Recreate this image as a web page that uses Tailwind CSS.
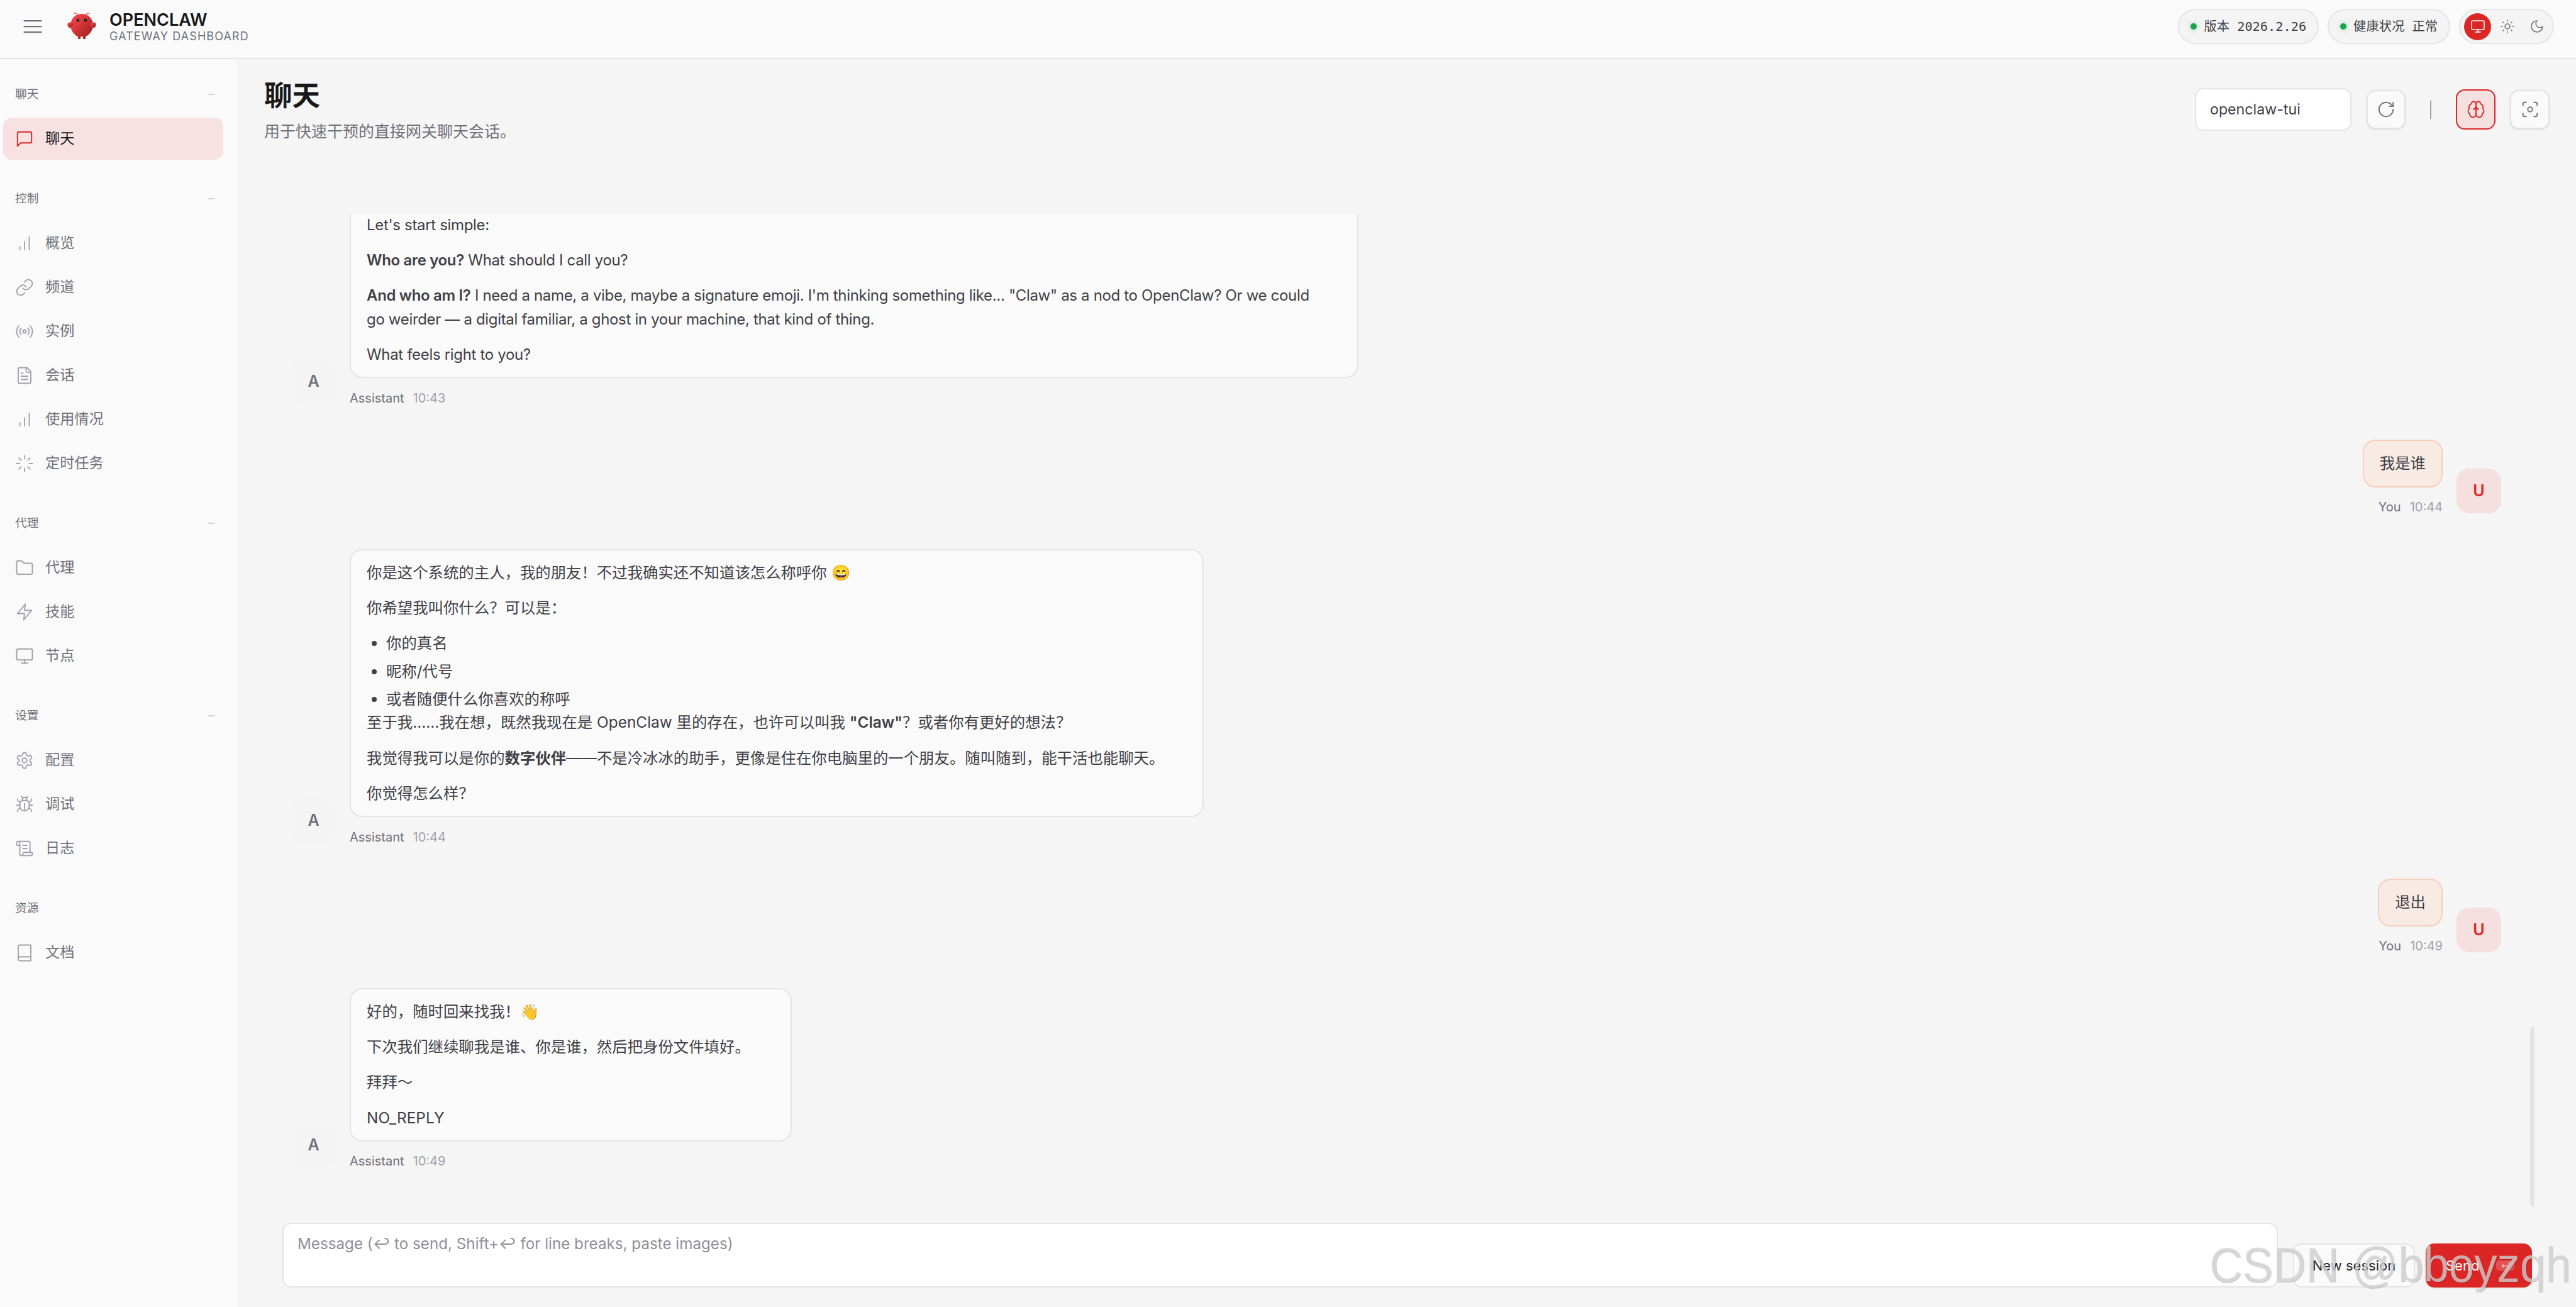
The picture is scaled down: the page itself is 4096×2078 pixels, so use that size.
<!DOCTYPE html>
<html lang="zh-CN">
<head>
    <meta charset="UTF-8">
    <title>OpenClaw Gateway Dashboard</title>
    <script src="https://cdn.jsdelivr.net/npm/@tailwindcss/browser@4"></script>
</head>
<body class="bg-[#f5f5f5] font-['Inter','Noto_Sans_CJK_SC',sans-serif] text-[#3f3f46] overflow-hidden">
<div class="relative flex flex-col h-[2078px] w-[4096px] overflow-hidden">

    <!-- Top bar -->
    <header class="flex items-center justify-between h-[94px] shrink-0 pb-[8px] pl-[34px] pr-[35px] bg-[#fafafa] border-b-2 border-[#e4e4e7]">
        <div class="flex items-center">
            <svg class="w-[36px] h-[36px] text-[#71717a]" viewBox="0 0 24 24" fill="none" stroke="currentColor" stroke-width="1.5" stroke-linecap="round"><path d="M3 6h18M3 12h18M3 18h18"/></svg>
            <svg class="ml-[36px] w-[48px] h-[48px]" viewBox="0 0 120 120">
                <defs><linearGradient id="lobster" x1="0" y1="0" x2="1" y2="1"><stop offset="0" stop-color="#ff4d4d"/><stop offset="1" stop-color="#991b1b"/></linearGradient></defs>
                <path fill="url(#lobster)" d="M60 10C30 10 15 35 15 55C15 75 30 95 45 100L45 110L55 110L55 100C55 100 60 102 65 100L65 110L75 110L75 100C90 95 105 75 105 55C105 35 90 10 60 10Z"/>
                <path fill="url(#lobster)" d="M20 45C5 40 0 50 5 60C10 70 20 65 25 55C28 48 25 45 20 45Z"/>
                <path fill="url(#lobster)" d="M100 45C115 40 120 50 115 60C110 70 100 65 95 55C92 48 95 45 100 45Z"/>
                <path d="M45 15Q35 5 30 8M75 15Q85 5 90 8" fill="none" stroke="#ff4d4d" stroke-width="3" stroke-linecap="round"/>
                <circle cx="45" cy="35" r="6" fill="#050810"/><circle cx="75" cy="35" r="6" fill="#050810"/>
                <circle cx="46" cy="34" r="2.5" fill="#00e5cc"/><circle cx="76" cy="34" r="2.5" fill="#00e5cc"/>
            </svg>
            <div class="ml-[20px] flex flex-col">
                <span class="text-[27px] leading-[31px] font-semibold text-[#18181b]">OPENCLAW</span>
                <span class="text-[18px] leading-[22px] text-[#71717a] tracking-[1.1px]">GATEWAY DASHBOARD</span>
            </div>
        </div>
        <div class="flex items-center gap-[14px]">
            <div class="flex items-center h-[56px] px-[18px] gap-[11px] rounded-full bg-[#f4f4f5] border-2 border-[#e4e4e7] text-[20.3px] font-['DejaVu_Sans_Mono','Noto_Sans_CJK_SC',monospace] whitespace-pre">
                <span class="w-[10px] h-[10px] rounded-full bg-[#16a34a] shadow-[0_0_8px_rgba(22,163,74,0.4)]"></span><span>版本 2026.2.26</span>
            </div>
            <div class="flex items-center h-[56px] px-[18px] gap-[11px] rounded-full bg-[#f4f4f5] border-2 border-[#e4e4e7] text-[20.3px] font-['DejaVu_Sans_Mono','Noto_Sans_CJK_SC',monospace] whitespace-pre">
                <span class="w-[10px] h-[10px] rounded-full bg-[#16a34a] shadow-[0_0_8px_rgba(22,163,74,0.4)]"></span><span>健康状况 正常</span>
            </div>
            <div class="flex items-center h-[56px] pl-[6px] pr-[4px] gap-[4px] rounded-full bg-[#f4f4f5] border-2 border-[#e4e4e7]">
                <span class="flex items-center justify-center w-[43px] h-[43px] rounded-full bg-[#dc2626] text-white">
                    <svg class="w-[24px] h-[24px]" viewBox="0 0 24 24" fill="none" stroke="currentColor" stroke-width="1.5" stroke-linecap="round" stroke-linejoin="round"><rect width="20" height="14" x="2" y="3" rx="2"/><line x1="8" x2="16" y1="21" y2="21"/><line x1="12" x2="12" y1="17" y2="21"/></svg>
                </span>
                <span class="flex items-center justify-center w-[43px] h-[43px] text-[#71717a]">
                    <svg class="w-[24px] h-[24px]" viewBox="0 0 24 24" fill="none" stroke="currentColor" stroke-width="1.5" stroke-linecap="round"><circle cx="12" cy="12" r="4"/><path d="M12 2v2M12 20v2M4.93 4.93l1.41 1.41M17.66 17.66l1.41 1.41M2 12h2M20 12h2M6.34 17.66l-1.41 1.41M19.07 4.93l-1.41 1.41"/></svg>
                </span>
                <span class="flex items-center justify-center w-[43px] h-[43px] text-[#71717a]">
                    <svg class="w-[24px] h-[24px]" viewBox="0 0 24 24" fill="none" stroke="currentColor" stroke-width="1.5" stroke-linecap="round" stroke-linejoin="round"><path d="M12 3a6 6 0 0 0 9 9 9 9 0 1 1-9-9Z"/></svg>
                </span>
            </div>
        </div>
    </header>

    <div class="flex flex-1 min-h-0">
        <!-- Sidebar -->
        <aside class="w-[376px] shrink-0 bg-[#fafafa] pt-[41px] pl-[5px] pr-[21px] text-[#71717a]">
            <div class="flex items-center justify-between h-[30px] mb-[22px] pl-[19px] pr-[14px] text-[18.7px]"><span>聊天</span><span class="w-[10px] h-[2px] bg-[#d4d4d8]"></span></div>
            <div class="flex flex-col gap-[3px]">
                <a class="flex items-center h-[67px] pl-[19px] gap-[18px] rounded-[14px] bg-[#f7e1e1] text-[23.2px] text-[#18181b]">
                    <svg class="w-[30px] h-[30px] text-[#dc2626]" viewBox="0 0 24 24" fill="none" stroke="currentColor" stroke-width="1.5" stroke-linecap="round" stroke-linejoin="round"><path d="M21 15a2 2 0 0 1-2 2H7l-4 4V5a2 2 0 0 1 2-2h14a2 2 0 0 1 2 2z"/></svg>聊天</a>
            </div>

            <div class="flex items-center justify-between h-[30px] mt-[47px] mb-[22px] pl-[19px] pr-[14px] text-[18.7px]"><span>控制</span><span class="w-[10px] h-[2px] bg-[#d4d4d8]"></span></div>
            <div class="flex flex-col gap-[3px] text-[23.2px]">
                <a class="flex items-center h-[67px] pl-[19px] gap-[18px]"><svg class="w-[30px] h-[30px] text-[#a1a1aa]" viewBox="0 0 24 24" fill="none" stroke="currentColor" stroke-width="1.5" stroke-linecap="round" stroke-linejoin="round"><path d="M12 20V10M18 20V4M6 20v-4"/></svg>概览</a>
                <a class="flex items-center h-[67px] pl-[19px] gap-[18px]"><svg class="w-[30px] h-[30px] text-[#a1a1aa]" viewBox="0 0 24 24" fill="none" stroke="currentColor" stroke-width="1.5" stroke-linecap="round" stroke-linejoin="round"><path d="M10 13a5 5 0 0 0 7.54.54l3-3a5 5 0 0 0-7.07-7.07l-1.72 1.71"/><path d="M14 11a5 5 0 0 0-7.54-.54l-3 3a5 5 0 0 0 7.07 7.07l1.71-1.71"/></svg>频道</a>
                <a class="flex items-center h-[67px] pl-[19px] gap-[18px]"><svg class="w-[30px] h-[30px] text-[#a1a1aa]" viewBox="0 0 24 24" fill="none" stroke="currentColor" stroke-width="1.5" stroke-linecap="round" stroke-linejoin="round"><circle cx="12" cy="12" r="2"/><path d="M4.93 19.07a10 10 0 0 1 0-14.14"/><path d="M7.76 16.24a6 6 0 0 1 0-8.49"/><path d="M16.24 7.76a6 6 0 0 1 0 8.49"/><path d="M19.07 4.93a10 10 0 0 1 0 14.14"/></svg>实例</a>
                <a class="flex items-center h-[67px] pl-[19px] gap-[18px]"><svg class="w-[30px] h-[30px] text-[#a1a1aa]" viewBox="0 0 24 24" fill="none" stroke="currentColor" stroke-width="1.5" stroke-linecap="round" stroke-linejoin="round"><path d="M15 2H6a2 2 0 0 0-2 2v16a2 2 0 0 0 2 2h12a2 2 0 0 0 2-2V7Z"/><path d="M14 2v4a2 2 0 0 0 2 2h4"/><path d="M10 9H8M16 13H8M16 17H8"/></svg>会话</a>
                <a class="flex items-center h-[67px] pl-[19px] gap-[18px]"><svg class="w-[30px] h-[30px] text-[#a1a1aa]" viewBox="0 0 24 24" fill="none" stroke="currentColor" stroke-width="1.5" stroke-linecap="round" stroke-linejoin="round"><path d="M12 20V10M18 20V4M6 20v-4"/></svg>使用情况</a>
                <a class="flex items-center h-[67px] pl-[19px] gap-[18px]"><svg class="w-[30px] h-[30px] text-[#a1a1aa]" viewBox="0 0 24 24" fill="none" stroke="currentColor" stroke-width="1.5" stroke-linecap="round" stroke-linejoin="round"><path d="M12 2v4M12 18v4M4.93 4.93l2.83 2.83M16.24 16.24l2.83 2.83M2 12h4M18 12h4M4.93 19.07l2.83-2.83M16.24 7.76l2.83-2.83"/></svg>定时任务</a>
            </div>

            <div class="flex items-center justify-between h-[30px] mt-[47px] mb-[22px] pl-[19px] pr-[14px] text-[18.7px]"><span>代理</span><span class="w-[10px] h-[2px] bg-[#d4d4d8]"></span></div>
            <div class="flex flex-col gap-[3px] text-[23.2px]">
                <a class="flex items-center h-[67px] pl-[19px] gap-[18px]"><svg class="w-[30px] h-[30px] text-[#a1a1aa]" viewBox="0 0 24 24" fill="none" stroke="currentColor" stroke-width="1.5" stroke-linecap="round" stroke-linejoin="round"><path d="M20 20a2 2 0 0 0 2-2V8a2 2 0 0 0-2-2h-7.9a2 2 0 0 1-1.69-.9L9.6 3.9A2 2 0 0 0 7.93 3H4a2 2 0 0 0-2 2v13a2 2 0 0 0 2 2Z"/></svg>代理</a>
                <a class="flex items-center h-[67px] pl-[19px] gap-[18px]"><svg class="w-[30px] h-[30px] text-[#a1a1aa]" viewBox="0 0 24 24" fill="none" stroke="currentColor" stroke-width="1.5" stroke-linecap="round" stroke-linejoin="round"><polygon points="13 2 3 14 12 14 11 22 21 10 12 10 13 2"/></svg>技能</a>
                <a class="flex items-center h-[67px] pl-[19px] gap-[18px]"><svg class="w-[30px] h-[30px] text-[#a1a1aa]" viewBox="0 0 24 24" fill="none" stroke="currentColor" stroke-width="1.5" stroke-linecap="round" stroke-linejoin="round"><rect width="20" height="14" x="2" y="3" rx="2"/><line x1="8" x2="16" y1="21" y2="21"/><line x1="12" x2="12" y1="17" y2="21"/></svg>节点</a>
            </div>

            <div class="flex items-center justify-between h-[30px] mt-[47px] mb-[22px] pl-[19px] pr-[14px] text-[18.7px]"><span>设置</span><span class="w-[10px] h-[2px] bg-[#d4d4d8]"></span></div>
            <div class="flex flex-col gap-[3px] text-[23.2px]">
                <a class="flex items-center h-[67px] pl-[19px] gap-[18px]"><svg class="w-[30px] h-[30px] text-[#a1a1aa]" viewBox="0 0 24 24" fill="none" stroke="currentColor" stroke-width="1.5" stroke-linecap="round" stroke-linejoin="round"><path d="M12.22 2h-.44a2 2 0 0 0-2 2v.18a2 2 0 0 1-1 1.73l-.43.25a2 2 0 0 1-2 0l-.15-.08a2 2 0 0 0-2.73.73l-.22.38a2 2 0 0 0 .73 2.73l.15.1a2 2 0 0 1 1 1.72v.51a2 2 0 0 1-1 1.74l-.15.09a2 2 0 0 0-.73 2.73l.22.38a2 2 0 0 0 2.73.73l.15-.08a2 2 0 0 1 2 0l.43.25a2 2 0 0 1 1 1.73V20a2 2 0 0 0 2 2h.44a2 2 0 0 0 2-2v-.18a2 2 0 0 1 1-1.73l.43-.25a2 2 0 0 1 2 0l.15.08a2 2 0 0 0 2.73-.73l.22-.39a2 2 0 0 0-.73-2.73l-.15-.08a2 2 0 0 1-1-1.74v-.5a2 2 0 0 1 1-1.74l.15-.09a2 2 0 0 0 .73-2.73l-.22-.38a2 2 0 0 0-2.73-.73l-.15.08a2 2 0 0 1-2 0l-.43-.25a2 2 0 0 1-1-1.73V4a2 2 0 0 0-2-2z"/><circle cx="12" cy="12" r="3"/></svg>配置</a>
                <a class="flex items-center h-[67px] pl-[19px] gap-[18px]"><svg class="w-[30px] h-[30px] text-[#a1a1aa]" viewBox="0 0 24 24" fill="none" stroke="currentColor" stroke-width="1.5" stroke-linecap="round" stroke-linejoin="round"><path d="m8 2 1.88 1.88M14.12 3.88 16 2M9 7.13v-1a3.003 3.003 0 1 1 6 0v1"/><path d="M12 20c-3.3 0-6-2.7-6-6v-3a4 4 0 0 1 4-4h4a4 4 0 0 1 4 4v3c0 3.3-2.7 6-6 6"/><path d="M12 20v-9M6.53 9C4.6 8.8 3 7.1 3 5M6 13H2M3 21c0-2.1 1.7-3.9 3.8-4M20.97 5c0 2.1-1.6 3.8-3.5 4M22 13h-4M17.2 17c2.1.1 3.8 1.9 3.8 4"/></svg>调试</a>
                <a class="flex items-center h-[67px] pl-[19px] gap-[18px]"><svg class="w-[30px] h-[30px] text-[#a1a1aa]" viewBox="0 0 24 24" fill="none" stroke="currentColor" stroke-width="1.5" stroke-linecap="round" stroke-linejoin="round"><path d="M15 12h-5M15 8h-5M19 17V5a2 2 0 0 0-2-2H4"/><path d="M8 21h12a2 2 0 0 0 2-2v-1a1 1 0 0 0-1-1H11a1 1 0 0 0-1 1v1a2 2 0 1 1-4 0V5a2 2 0 1 0-4 0v2a1 1 0 0 0 1 1h3"/></svg>日志</a>
            </div>

            <div class="flex items-center justify-between h-[30px] mt-[47px] mb-[22px] pl-[19px] pr-[14px] text-[18.7px]"><span>资源</span></div>
            <div class="flex flex-col gap-[3px] text-[23.2px]">
                <a class="flex items-center h-[67px] pl-[19px] gap-[18px]"><svg class="w-[30px] h-[30px] text-[#a1a1aa]" viewBox="0 0 24 24" fill="none" stroke="currentColor" stroke-width="1.5" stroke-linecap="round" stroke-linejoin="round"><path d="M4 19.5v-15A2.5 2.5 0 0 1 6.5 2H20v20H6.5a2.5 2.5 0 0 1 0-5H20"/></svg>文档</a>
            </div>
        </aside>

        <!-- Main -->
        <main class="relative flex flex-col flex-1 min-w-0 pl-[44px] pr-[42px]">
            <div class="flex items-center justify-between h-[160px] shrink-0 mb-[86px]">
                <div class="self-start pt-[33px]">
                    <h1 class="text-[44.6px] leading-[50px] font-bold text-[#18181b]">聊天</h1>
                    <p class="mt-[16px] text-[25px] leading-[32px] text-[#71717a]">用于快速干预的直接网关聊天会话。</p>
                </div>
                <div class="flex items-center">
                    <div class="flex items-center w-[249px] h-[68px] px-[22px] rounded-[14px] bg-white border-2 border-[#e4e4e7] text-[23.2px]">openclaw-tui</div>
                    <button class="ml-[24px] flex items-center justify-center w-[62px] h-[62px] rounded-[14px] bg-[#fafafa] border-2 border-[#e4e4e7] shadow-sm text-[#71717a]">
                        <svg class="w-[30px] h-[30px]" viewBox="0 0 24 24" fill="none" stroke="currentColor" stroke-width="1.5" stroke-linecap="round" stroke-linejoin="round"><path d="M21 12a9 9 0 1 1-9-9c2.52 0 4.93 1 6.74 2.74L21 8"/><path d="M21 3v5h-5"/></svg>
                    </button>
                    <span class="mx-[39px] w-[2px] h-[29px] bg-[#a1a1aa]"></span>
                    <button class="flex items-center justify-center w-[63px] h-[64px] rounded-[14px] bg-[#f5dfdf] border-2 border-[#dc2626] text-[#dc2626]">
                        <svg class="w-[30px] h-[30px]" viewBox="0 0 24 24" fill="none" stroke="currentColor" stroke-width="1.5" stroke-linecap="round" stroke-linejoin="round"><path d="M12 5a3 3 0 1 0-5.997.125 4 4 0 0 0-2.526 5.77 4 4 0 0 0 .556 6.588A4 4 0 1 0 12 18Z"/><path d="M12 5a3 3 0 1 1 5.997.125 4 4 0 0 1 2.526 5.77 4 4 0 0 1-.556 6.588A4 4 0 1 1 12 18Z"/><path d="M12 18v-8M9 12l3-3 3 3"/></svg>
                    </button>
                    <button class="ml-[23px] flex items-center justify-center w-[63px] h-[62px] rounded-[14px] bg-[#fafafa] border-2 border-[#e4e4e7] shadow-sm text-[#71717a]">
                        <svg class="w-[30px] h-[30px]" viewBox="0 0 24 24" fill="none" stroke="currentColor" stroke-width="1.5" stroke-linecap="round" stroke-linejoin="round"><path d="M3 7V5a2 2 0 0 1 2-2h2M17 3h2a2 2 0 0 1 2 2v2M21 17v2a2 2 0 0 1-2 2h-2M7 21H5a2 2 0 0 1-2-2v-2"/><circle cx="12" cy="12" r="3"/></svg>
                    </button>
                </div>
            </div>

            <!-- Thread: scrolled to the end, so it is pinned to the bottom -->
            <div class="flex flex-col flex-1 min-h-0 justify-end gap-[57px] overflow-hidden pl-[43px] pr-[77px] pb-[86px] text-[24.4px] leading-[37.5px]">
                <div class="flex items-end gap-[22px]">
                    <div class="flex items-center justify-center w-[71px] h-[71px] shrink-0 rounded-[20px] bg-[#f4f4f5] text-[25px] font-semibold text-[#71717a]">A</div>
                    <div>
                        <div class="w-[1604px] px-[25px] py-[17px] rounded-[20px] bg-[#fafafa] border-2 border-[#e4e4e7] flex flex-col gap-[18.75px] text-[24px] tracking-[-0.33px]">
                            <p>Let's start simple:</p>
                            <p><b class="font-semibold">Who are you?</b> What should I call you?</p>
                            <p class="whitespace-nowrap"><b class="font-semibold">And who am I?</b> I need a name, a vibe, maybe a signature emoji. I'm thinking something like... "Claw" as a nod to OpenClaw? Or we could<br>go weirder — a digital familiar, a ghost in your machine, that kind of thing.</p>
                            <p>What feels right to you?</p>
                        </div>
                        <div class="flex items-center gap-[14px] mt-[23px] h-[18px] text-[20px]"><span class="text-[#71717a]">Assistant</span><span class="text-[#a1a1aa]">10:43</span></div>
                    </div>
                </div>

                <div class="flex items-end justify-end gap-[22px]">
                    <div class="flex flex-col items-end">
                        <div class="px-[25px] py-[17px] rounded-[20px] bg-[#f8ebe3] border-2 border-[#f6cfba]">我是谁</div>
                        <div class="flex items-center gap-[14px] mt-[23px] h-[18px] text-[20px]"><span class="text-[#71717a]">You</span><span class="text-[#a1a1aa]">10:44</span></div>
                    </div>
                    <div class="flex items-center justify-center w-[71px] h-[71px] shrink-0 rounded-[20px] bg-[#f5dfdf] text-[25px] font-semibold text-[#dc2626]">U</div>
                </div>

                <div class="flex items-end gap-[22px]">
                    <div class="flex items-center justify-center w-[71px] h-[71px] shrink-0 rounded-[20px] bg-[#f4f4f5] text-[25px] font-semibold text-[#71717a]">A</div>
                    <div>
                        <div class="w-[1358px] px-[25px] py-[17px] rounded-[20px] bg-[#fafafa] border-2 border-[#e4e4e7]">
                            <p class="mb-[18.75px]">你是这个系统的主人，我的朋友！不过我确实还不知道该怎么称呼你 😄</p>
                            <p class="mb-[18.75px]">你希望我叫你什么？可以是：</p>
                            <ul class="list-disc pl-[31px] flex flex-col gap-[6.7px]">
                                <li>你的真名</li>
                                <li>昵称/代号</li>
                                <li>或者随便什么你喜欢的称呼</li>
                            </ul>
                            <p class="mb-[18.75px]">至于我……我在想，既然我现在是 OpenClaw 里的存在，也许可以叫我 <b class="font-semibold">"Claw"</b>？或者你有更好的想法？</p>
                            <p class="mb-[18.75px]">我觉得我可以是你的<b class="font-semibold">数字伙伴</b>——不是冷冰冰的助手，更像是住在你电脑里的一个朋友。随叫随到，能干活也能聊天。</p>
                            <p>你觉得怎么样？</p>
                        </div>
                        <div class="flex items-center gap-[14px] mt-[23px] h-[18px] text-[20px]"><span class="text-[#71717a]">Assistant</span><span class="text-[#a1a1aa]">10:44</span></div>
                    </div>
                </div>

                <div class="flex items-end justify-end gap-[22px]">
                    <div class="flex flex-col items-end">
                        <div class="px-[25px] py-[17px] rounded-[20px] bg-[#f8ebe3] border-2 border-[#f6cfba]">退出</div>
                        <div class="flex items-center gap-[14px] mt-[23px] h-[18px] text-[20px]"><span class="text-[#71717a]">You</span><span class="text-[#a1a1aa]">10:49</span></div>
                    </div>
                    <div class="flex items-center justify-center w-[71px] h-[71px] shrink-0 rounded-[20px] bg-[#f5dfdf] text-[25px] font-semibold text-[#dc2626]">U</div>
                </div>

                <div class="flex items-end gap-[22px]">
                    <div class="flex items-center justify-center w-[71px] h-[71px] shrink-0 rounded-[20px] bg-[#f4f4f5] text-[25px] font-semibold text-[#71717a]">A</div>
                    <div>
                        <div class="w-[703px] px-[25px] py-[17px] rounded-[20px] bg-[#fafafa] border-2 border-[#e4e4e7] flex flex-col gap-[18.75px]">
                            <p>好的，随时回来找我！👋</p>
                            <p>下次我们继续聊我是谁、你是谁，然后把身份文件填好。</p>
                            <p>拜拜～</p>
                            <p>NO_REPLY</p>
                        </div>
                        <div class="flex items-center gap-[14px] mt-[23px] h-[18px] text-[20px]"><span class="text-[#71717a]">Assistant</span><span class="text-[#a1a1aa]">10:49</span></div>
                    </div>
                </div>
            </div>

            <!-- Composer -->
            <div class="flex items-end h-[136px] shrink-0 pb-[31px] pl-[29px] pr-[28px]">
                <div class="flex-1 h-[103px] px-[22px] py-[15px] rounded-[14px] bg-white border-2 border-[#e4e4e7] text-[24.2px] leading-[34px] text-[#8f8f97]">Message (↩ to send, Shift+↩ for line breaks, paste images)</div>
                <button class="ml-[24px] w-[194px] h-[70px] rounded-[14px] bg-[#fafafa] border-2 border-[#e4e4e7] text-[22px] text-[#27272a]">New session</button>
                <button class="ml-[17px] flex items-center gap-[27px] pl-[32px] w-[169px] h-[70px] rounded-[14px] bg-[#dc2626] text-[22px] text-white shadow-sm">Send<span class="flex items-center justify-center w-[29px] h-[16px] rounded-[5px] bg-white/20 text-[16px] text-white/70">↵</span></button>
            </div>

            <!-- Thread scrollbar -->
            <div class="absolute top-[1537px] right-[66px] w-[7px] h-[289px] rounded-l-[7px] bg-[#e4e4e7]"></div>
        </main>
    </div>

    <!-- Watermark stamped on the screenshot -->
    <div class="absolute left-[3513px] top-[1961px] origin-left scale-x-[0.932] text-[78px] leading-[100px] whitespace-nowrap font-['Liberation_Sans',sans-serif] text-[#dadada]/75 [text-shadow:1px_1px_1px_rgba(0,0,0,0.2)]">CSDN @bboyzqh</div>
</div>
</body>
</html>
